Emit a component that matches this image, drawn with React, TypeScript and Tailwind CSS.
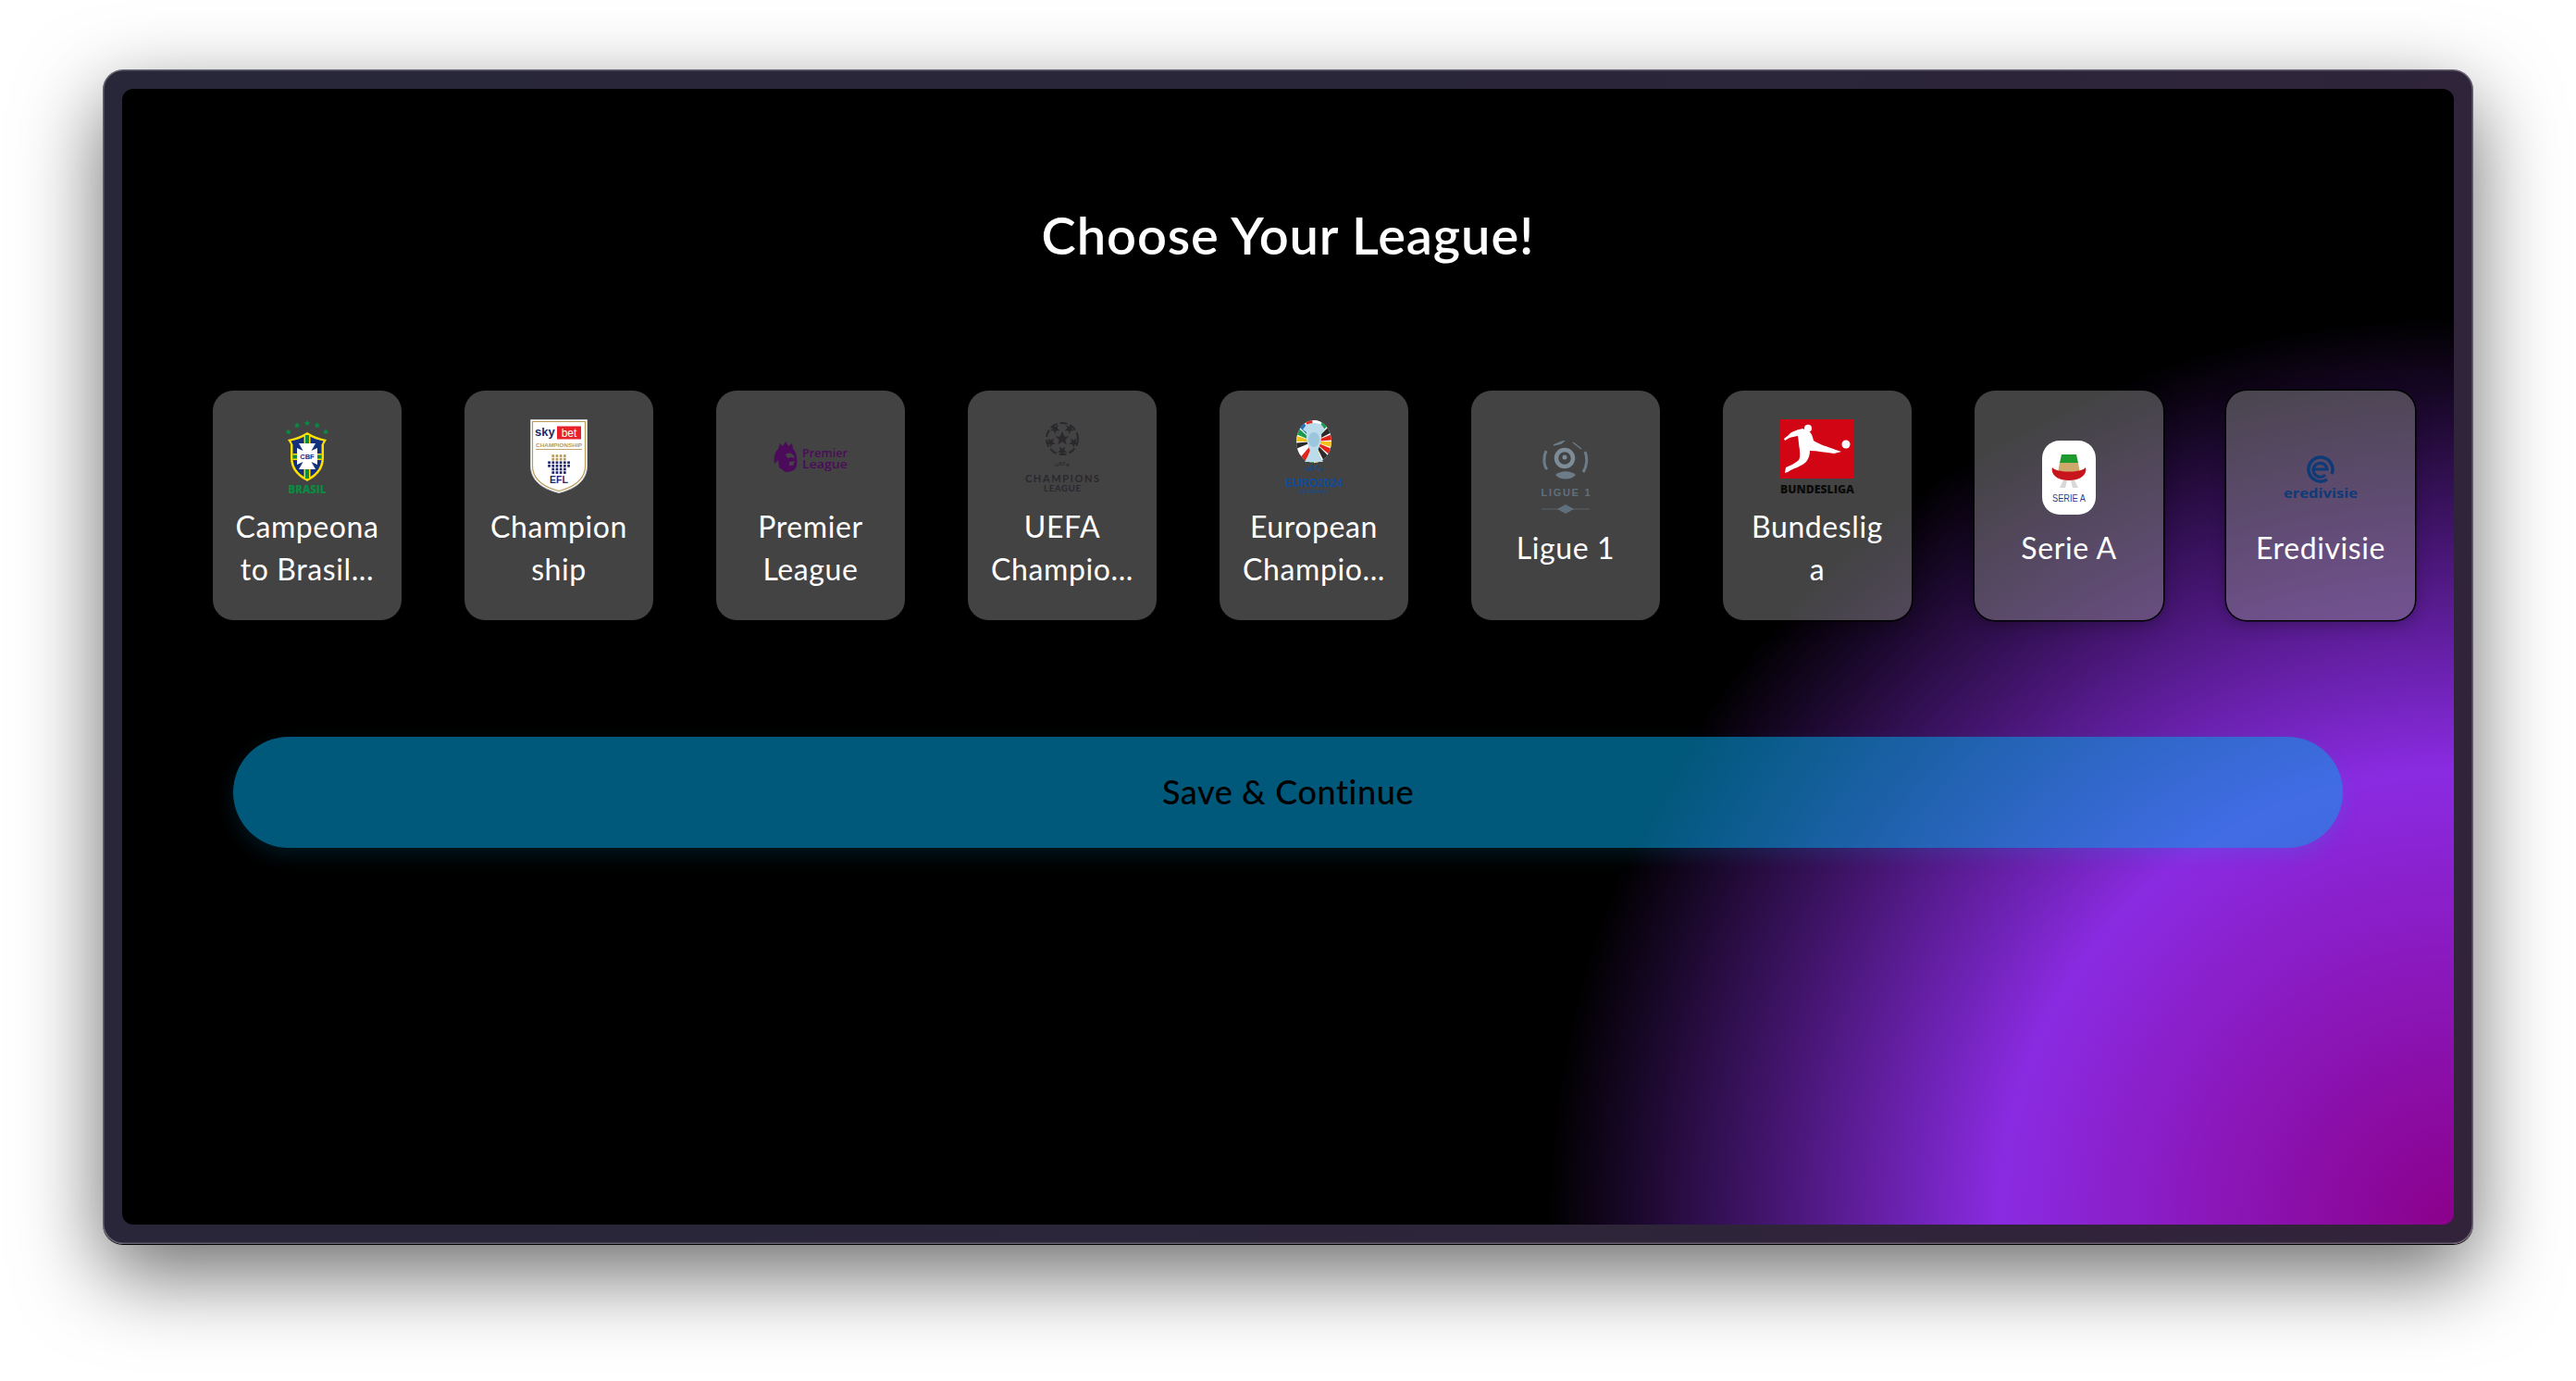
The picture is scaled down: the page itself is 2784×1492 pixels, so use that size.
const font = "Lato, 'Open Sans', sans-serif";

function CbfLogo() {
  const stars = [
    [19.7, 13.7],
    [29, 6.7],
    [40, 4],
    [50.7, 6.7],
    [60, 13.7],
  ];
  return (
    <svg viewBox="0 0 80 80" className="w-full h-full overflow-visible">
      {stars.map(([x, y]) => (
        <polygon
          key={x}
          transform={`translate(${x} ${y}) scale(3.6)`}
          points="0,-1 0.29,-0.31 0.95,-0.31 0.41,0.12 0.59,0.81 0,0.4 -0.59,0.81 -0.41,0.12 -0.95,-0.31 -0.29,-0.31"
          fill="#0b8a43"
        />
      ))}
      <path d="M40 14 Q30 20 19 22 L22 27 L22 42 Q22 58 40 67 Q58 58 58 42 L58 27 L61 22 Q50 20 40 14Z" fill="#ffdf00" />
      <path d="M40 17 Q31 22 22.5 23.5 L24.5 27.5 L24.5 42 Q24.5 56 40 64 Q55.5 56 55.5 42 L55.5 27.5 L57.5 23.5 Q49 22 40 17Z" fill="#13307e" />
      <rect x="36.5" y="17" width="7" height="47" fill="#ffdf00" />
      <rect x="38" y="17" width="4" height="47" fill="#0b8a43" />
      <rect x="24.5" y="37" width="31" height="7" fill="#ffdf00" />
      <rect x="24.5" y="38.5" width="31" height="4" fill="#0b8a43" />
      <path d="M31 26 H49 L44.5 34 L51 31 V49 L44.5 46 L49 54 H31 L35.5 46 L29 49 V31 L35.5 34Z" fill="#fff" />
      <text x="40" y="43" textAnchor="middle" fontSize="7.5" fontWeight="700" fill="#13307e" fontFamily="'Liberation Sans', sans-serif">CBF</text>
      <text x="40" y="79.5" textAnchor="middle" fontSize="12" fontWeight="800" fill="#0b8a43" textLength="41" lengthAdjust="spacingAndGlyphs" fontFamily="'Open Sans', sans-serif">BRASIL</text>
    </svg>
  );
}

function EflLogo() {
  const dots = [];
  for (let row = 0; row < 6; row++) {
    for (let col = 0; col < 6; col++) {
      const x = 29.5 + col * 4.2;
      const y = 39.5 + row * 3.6;
      if (Math.hypot(x - 40, y - 48.5) < 11) {
        dots.push(<rect key={`${row}-${col}`} x={x - 1.3} y={y - 1.3} width="2.7" height="2.7" fill={y < 45 && x > 33 ? "#b99a55" : "#23286b"} />);
      }
    }
  }
  return (
    <svg viewBox="0 0 80 80" className="w-full h-full">
      <path d="M9.5 0.5 H70.5 V50 Q70.5 72 40 79.5 Q9.5 72 9.5 50Z" fill="#fff" stroke="#c9cbd0" strokeWidth="1" />
      <path d="M11.5 2.5 H68.5 V50 Q68.5 70 40 77.5 Q11.5 70 11.5 50Z" fill="#fff" stroke="#b99a55" strokeWidth="1.2" />
      <text x="14" y="18" fontSize="13" fontWeight="700" fill="#23286b" fontFamily="'Liberation Sans', sans-serif">sky</text>
      <rect x="38" y="7.5" width="26" height="14" fill="#e8202a" />
      <text x="51" y="18.5" textAnchor="middle" fontSize="12" fill="#fff" fontFamily="'Liberation Sans', sans-serif">bet</text>
      <text x="40" y="29.5" textAnchor="middle" fontSize="6" fontWeight="700" fill="#b99a55" textLength="50" lengthAdjust="spacingAndGlyphs" fontFamily="'Liberation Sans', sans-serif">CHAMPIONSHIP</text>
      <rect x="15" y="32" width="50" height="0.9" fill="#b99a55" />
      {dots}
      <text x="40" y="69" textAnchor="middle" fontSize="10.5" fontWeight="700" fill="#23286b" fontFamily="'Liberation Sans', sans-serif">EFL</text>
    </svg>
  );
}

function PremierLogo() {
  return (
    <svg viewBox="0 0 80 80" className="w-full h-full">
      <path d="M5 32 L7 26 L10 29 L13 24 L16 29 L20 26 L21 32 C25 36 26 42 25 50 C24 55 19 57 13 57 L6 52 L5 44 L1 48 C0 42 1 36 5 32Z" fill="#4b0a5a" />
      <path d="M13 38 C17 35 22 37 23 42 L19 41 L15 42Z" fill="#444444" />
      <path d="M17 46 L23 45 L21 50 L17 50Z" fill="#444444" />
      <text x="31" y="40.5" fontSize="13" fontWeight="600" fill="#4b0a5a" textLength="49" lengthAdjust="spacingAndGlyphs" fontFamily="'Open Sans', sans-serif">Premier</text>
      <text x="31" y="53" fontSize="13" fontWeight="600" fill="#4b0a5a" textLength="49" lengthAdjust="spacingAndGlyphs" fontFamily="'Open Sans', sans-serif">League</text>
    </svg>
  );
}

function UclLogo() {
  const ink = "#2a282c";
  const angles = [0, 72, 144, 216, 288];
  const star = "0,-1 0.29,-0.31 0.95,-0.31 0.41,0.12 0.59,0.81 0,0.4 -0.59,0.81 -0.41,0.12 -0.95,-0.31 -0.29,-0.31";
  return (
    <svg viewBox="0 0 80 80" className="w-full h-full">
      <circle cx="40" cy="21" r="17" fill="none" stroke={ink} strokeWidth="2" strokeDasharray="8 3" />
      <polygon points={star} transform="translate(40 21) scale(8)" fill={ink} />
      {angles.map((a) => (
        <polygon key={a} points={star} transform={`rotate(${a + 36} 40 21) translate(40 8) scale(5.5)`} fill={ink} />
      ))}
      <path id="ucl-arc" d="M30 55 Q40 44 50 55" fill="none" stroke="none" />
      <text fontSize="5.5" fill={ink} fontWeight="700" fontFamily="'Liberation Sans', sans-serif">
        <textPath href="#ucl-arc" startOffset="50%" textAnchor="middle">UEFA</textPath>
      </text>
      <text x="40" y="68" textAnchor="middle" fontSize="11" fontWeight="700" fill={ink} textLength="80" fontFamily="Lato, sans-serif">CHAMPIONS</text>
      <text x="40" y="78" textAnchor="middle" fontSize="9.5" fontWeight="700" fill={ink} textLength="40" fontFamily="Lato, sans-serif">LEAGUE</text>
    </svg>
  );
}

function EuroLogo() {
  const colors = ["#f2c21b", "#e2231a", "#2b2b2b", "#f2c21b", "#1c9a4d", "#e2231a", "#fff", "#2b2b2b", "#f2c21b", "#1c9a4d", "#1f6fc4", "#e2231a", "#fff", "#1c9a4d", "#2b2b2b", "#e2231a"];
  return (
    <svg viewBox="0 0 80 80" className="w-full h-full overflow-visible">
      <defs>
        <clipPath id="euro-oval">
          <ellipse cx="40" cy="24" rx="19" ry="23" />
        </clipPath>
      </defs>
      <ellipse cx="40" cy="24" rx="19" ry="23" fill="#fff" />
      <g clipPath="url(#euro-oval)">
        {colors.map((c, i) => {
          const a0 = (i / colors.length) * Math.PI * 2;
          const a1 = ((i + 0.8) / colors.length) * Math.PI * 2;
          return (
            <polygon
              key={i}
              points={`40,24 ${40 + 40 * Math.cos(a0)},${24 + 40 * Math.sin(a0)} ${40 + 40 * Math.cos(a1)},${24 + 40 * Math.sin(a1)}`}
              fill={c}
            />
          );
        })}
      </g>
      <path d="M31 7 C33 3 47 3 49 7 L52 11 L48 14 C49 22 46 30 44 34 C45 38 48 42 50 46 H30 C32 42 35 38 36 34 C34 30 31 22 32 14 L28 11Z" fill="#bcdcec" />
      <ellipse cx="40" cy="22" rx="6" ry="8" fill="#9cc6dc" />
      <path id="euro-arc" d="M28 61 Q40 48 52 61" fill="none" stroke="none" />
      <text fontSize="6.5" fontWeight="700" fill="#0f4d9c" fontFamily="'Liberation Sans', sans-serif">
        <textPath href="#euro-arc" startOffset="50%" textAnchor="middle">UEFA</textPath>
      </text>
      <text x="40" y="73" textAnchor="middle" fontSize="12" fontWeight="700" fill="#0f4d9c" textLength="62" lengthAdjust="spacingAndGlyphs" fontFamily="'Liberation Sans', sans-serif">EURO2024</text>
      <text x="40" y="79.5" textAnchor="middle" fontSize="6" fill="#0f4d9c" textLength="34" lengthAdjust="spacingAndGlyphs" fontFamily="'Liberation Sans', sans-serif">GERMANY</text>
    </svg>
  );
}

function LigueLogo() {
  const ink = "#5f707c";
  return (
    <svg viewBox="0 0 80 80" className="w-full h-full">
      <circle cx="39" cy="19" r="9" fill="none" stroke="#7d8c96" strokeWidth="4.5" />
      <circle cx="39" cy="18" r="2.5" fill="#7d8c96" />
      <path d="M29 37 C35 32 45 32 51 37 C46 43 34 43 29 37Z" fill="#6d7c86" />
      <path d="M19 11 C16 17 16 27 20 31" fill="none" stroke="#6d7c86" strokeWidth="3" />
      <path d="M61 12 C64 19 63 28 59 34" fill="none" stroke="#6d7c86" strokeWidth="3" />
      <path d="M27 5 L39 0 L35 3Z M48 2 L57 9" fill="#6d7c86" stroke="#6d7c86" strokeWidth="1.5" />
      <text x="40" y="60" textAnchor="middle" fontSize="11" fontWeight="700" fill={ink} textLength="53" fontFamily="'Liberation Sans', sans-serif">LIGUE 1</text>
      <path d="M14 74 H33 M47 74 H66" stroke={ink} strokeWidth="0.7" />
      <path d="M31 74 L40 69 L49 74 L40 79Z" fill={ink} />
    </svg>
  );
}

function BundesligaLogo() {
  return (
    <svg viewBox="0 0 80 80" className="w-full h-full overflow-visible">
      <rect width="80" height="64" fill="#d20515" />
      <path d="M24 10 C20 11 12 13 9 17 L4 21 L5 23 L10 20 C14 19 17 18 19 18 C20 24 20 28 21 33 C21 37 22 40 20 44 C17 47 11 50 6 52 L5 58 L8 57 C14 53 23 51 28 46 C31 42 32 38 32 34 C40 34 50 36 58 37 L66 35 L60 33 C52 30 42 27 36 23 C35 19 34 15 31 13Z" fill="#fff" />
      <circle cx="30" cy="9.7" r="4" fill="#fff" />
      <circle cx="71" cy="27" r="4.5" fill="#fff" />
      <text x="40" y="79.5" textAnchor="middle" fontSize="12" fontWeight="800" fill="#0b0b0b" textLength="80" lengthAdjust="spacingAndGlyphs" fontFamily="'Open Sans', sans-serif">BUNDESLIGA</text>
    </svg>
  );
}

function SerieLogo() {
  return (
    <svg viewBox="0 0 80 80" className="w-full h-full">
      <rect x="11" y="0" width="58" height="80" rx="19" fill="#fff" />
      <path d="M32 15 H48 L50 24 H30Z" fill="#1f9a2e" />
      <path d="M30 24 H50 L52 35 H28Z" fill="#cfa96b" />
      <path d="M22 29 C26 35 54 35 58 29 C60 37 52 43 40 43 C28 43 20 37 22 29Z" fill="#c8141c" />
      <path d="M34 43 L30 51 H36 L38 43Z M42 43 L44 51 H50 L46 43Z" fill="#d8d8d8" />
      <text x="40" y="66" textAnchor="middle" fontSize="10" fill="#1f3f8f" textLength="36" lengthAdjust="spacingAndGlyphs" fontFamily="'Liberation Sans', sans-serif">SERIE A</text>
    </svg>
  );
}

function EredivisieLogo() {
  const ink = "#0f3a78";
  return (
    <svg viewBox="0 0 80 80" className="w-full h-full">
      <path d="M47 42 A13 13 0 1 1 52 36" fill="none" stroke={ink} strokeWidth="3.5" />
      <path d="M33 31 H47 A7.5 7.5 0 1 0 45 37" fill="none" stroke={ink} strokeWidth="3.2" />
      <text x="40" y="62" textAnchor="middle" fontSize="14" fontWeight="700" fill={ink} textLength="80" lengthAdjust="spacingAndGlyphs" fontFamily="'Open Sans', sans-serif">eredivisie</text>
    </svg>
  );
}

const leagues = [
  { id: "br", lines: ["Campeona", "to Brasil..."], logo: <CbfLogo /> },
  { id: "efl", lines: ["Champion", "ship"], logo: <EflLogo /> },
  { id: "pl", lines: ["Premier", "League"], logo: <PremierLogo /> },
  { id: "ucl", lines: ["UEFA", "Champio..."], logo: <UclLogo /> },
  { id: "euro", lines: ["European", "Champio..."], logo: <EuroLogo /> },
  { id: "l1", lines: ["Ligue 1"], logo: <LigueLogo /> },
  { id: "bl", lines: ["Bundeslig", "a"], logo: <BundesligaLogo /> },
  { id: "sa", lines: ["Serie A"], logo: <SerieLogo /> },
  { id: "ere", lines: ["Eredivisie"], logo: <EredivisieLogo /> },
];

export default function App() {
  return (
    <div className="h-[1492px] bg-white pt-[75px]" style={{ fontFamily: font }}>
      {/* Device frame */}
      <div className="mx-auto w-[2562px] h-[1269px] rounded-[22px] p-[21px] bg-[linear-gradient(120deg,#282639,#2b2639_55%,#33233a)] shadow-[inset_0_0_0_1.5px_rgba(255,255,255,0.28),0_1px_0_#000,0_32px_90px_rgba(0,0,0,0.58)]">
        <div className="h-full rounded-[12px] overflow-hidden bg-[radial-gradient(circle_980px_at_100%_100%,#8b008b_0%,#8a2be2_50%,#000_100%)]">
          {/* Title */}
          <h1 className="pt-[123px] h-[326px] text-center text-[56px] leading-[70px] tracking-[0.9px] font-semibold text-white">
            Choose Your League!
          </h1>

          {/* League cards */}
          <div className="flex gap-[68px] pl-[98px]">
            {leagues.map((league) => (
              <div
                key={league.id}
                className="flex flex-col items-center justify-center w-[204px] h-[248px] shrink-0 rounded-[22px] bg-[#8d8d8d]/48 shadow-[0_0_0_1.5px_#000,0_4px_18px_rgba(0,0,0,0.3)]"
              >
                <div className="w-[80px] h-[80px]">{league.logo}</div>
                <div className="mt-[13px] pb-[2px] text-center text-[32px] leading-[46px] tracking-[0.6px] text-white">
                  {league.lines.map((line) => (
                    <div key={line}>{line}</div>
                  ))}
                </div>
              </div>
            ))}
          </div>

          {/* Save button */}
          <button className="block mx-auto mt-[126px] pb-[3px] w-[2280px] h-[120px] rounded-[60px] bg-[#00a6e6]/53 text-[36px] tracking-[0.6px] font-medium text-black shadow-[0_8px_20px_rgba(0,166,230,0.14)]">
            Save &amp; Continue
          </button>
        </div>
      </div>
    </div>
  );
}
